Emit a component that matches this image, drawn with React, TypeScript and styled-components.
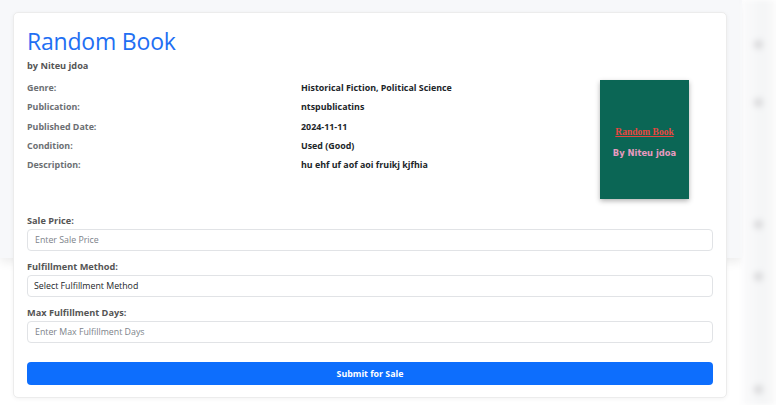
import styled, { createGlobalStyle } from 'styled-components';

const GlobalStyle = createGlobalStyle`
  html, body {
    margin: 0;
    padding: 0;
    background: #ffffff;
  }
  body {
    font-family: "Open Sans", "Noto Sans", Arial, sans-serif;
    color: #212529;
  }
`;

const details = [
  { label: 'Genre:', value: 'Historical Fiction, Political Science' },
  { label: 'Publication:', value: 'ntspublicatins' },
  { label: 'Published Date:', value: '2024-11-11' },
  { label: 'Condition:', value: 'Used (Good)' },
  { label: 'Description:', value: 'hu ehf uf aof aoi fruikj kjfhia' },
];

const backdropDots = [40, 98, 220, 272, 385];

const App = () => {
  return (
    <Page>
      <GlobalStyle />
      <Backdrop aria-hidden>
        <BehindPanel />
        <SideColumn>
          {backdropDots.map((y) => (
            <Dot key={y} style={{ top: y }} />
          ))}
        </SideColumn>
      </Backdrop>

      <Card>
        <Header>
          <Info>
            <Title>Random Book</Title>
            <Byline>by Niteu jdoa</Byline>
            <DetailGrid>
              {details.map((d) => (
                <DetailRow key={d.label}>
                  <DetailLabel>{d.label}</DetailLabel>
                  <DetailValue>{d.value}</DetailValue>
                </DetailRow>
              ))}
            </DetailGrid>
          </Info>
          <Cover>
            <CoverTitle>Random Book</CoverTitle>
            <CoverAuthor>By Niteu jdoa</CoverAuthor>
          </Cover>
        </Header>

        <Form onSubmit={(e) => e.preventDefault()}>
          <Field>
            <FieldLabel>Sale Price:</FieldLabel>
            <Input placeholder="Enter Sale Price" />
          </Field>
          <Field>
            <FieldLabel>Fulfillment Method:</FieldLabel>
            <Select defaultValue="">
              <option value="">Select Fulfillment Method</option>
            </Select>
          </Field>
          <Field>
            <FieldLabel>Max Fulfillment Days:</FieldLabel>
            <Input placeholder="Enter Max Fulfillment Days" />
          </Field>
          <SubmitButton type="submit">Submit for Sale</SubmitButton>
        </Form>
      </Card>
    </Page>
  );
};

const Page = styled.div`
  position: relative;
  width: 776px;
  height: 405px;
  overflow: hidden;
  padding: 12px 0 0 13px;
  box-sizing: border-box;
`;

const Backdrop = styled.div`
  position: absolute;
  inset: 0;
  pointer-events: none;
`;

const BehindPanel = styled.div`
  position: absolute;
  left: 0;
  top: 0;
  width: 742px;
  height: 258px;
  background: #f7f8fa;
  box-shadow: 0 4px 10px rgba(0, 0, 0, 0.08);
`;

const SideColumn = styled.div`
  position: absolute;
  left: 742px;
  top: 0;
  width: 34px;
  height: 405px;
  background: linear-gradient(90deg, #fbfbfc, #f4f5f6 60%, #fafafa);
  filter: blur(2px);
`;

const Dot = styled.span`
  position: absolute;
  left: 12px;
  width: 9px;
  height: 9px;
  border-radius: 50%;
  background: #d9d9db;
  filter: blur(2px);
`;

const Card = styled.div`
  position: relative;
  width: 714px;
  height: 386px;
  box-sizing: border-box;
  padding: 13px 13px 0 13px;
  background: #ffffff;
  border: 1px solid #ececec;
  border-radius: 5px;
  box-shadow: 0 1px 4px rgba(0, 0, 0, 0.05);
  display: flex;
  flex-direction: column;
`;

const Header = styled.div`
  display: flex;
  align-items: flex-start;
  height: 188px;
`;

const Info = styled.div`
  flex: 1;
  display: flex;
  flex-direction: column;
`;

const Title = styled.h1`
  margin: 0;
  font-size: 23px;
  font-weight: 400;
  line-height: 30px;
  color: #1f6ff3;
  letter-spacing: -0.2px;
`;

const Byline = styled.div`
  margin-top: 3px;
  font-size: 9.2px;
  font-weight: 700;
  line-height: 14px;
  color: #555;
`;

const DetailGrid = styled.div`
  margin-top: 5px;
  display: flex;
  flex-direction: column;
`;

const DetailRow = styled.div`
  display: grid;
  grid-template-columns: 274px 1fr;
  height: 19.3px;
  align-items: center;
  font-size: 8.9px;
  font-weight: 700;
`;

const DetailLabel = styled.span`
  color: #6c6f73;
`;

const DetailValue = styled.span`
  color: #212529;
`;

const Cover = styled.div`
  margin: 54px 24px 0 0;
  width: 89px;
  height: 119px;
  box-sizing: border-box;
  padding-top: 6px;
  background: #0b6655;
  box-shadow: 0 2px 5px rgba(0, 0, 0, 0.3);
  display: flex;
  flex-direction: column;
  align-items: center;
  justify-content: center;
  gap: 11px;
`;

const CoverTitle = styled.span`
  font-family: "Liberation Serif", "Times New Roman", serif;
  font-size: 9.5px;
  font-weight: 700;
  color: #e8473f;
  text-decoration: underline;
`;

const CoverAuthor = styled.span`
  font-family: "DejaVu Sans", Verdana, sans-serif;
  font-size: 8.4px;
  font-weight: 700;
  color: #e79ac0;
`;

const Form = styled.form`
  display: flex;
  flex-direction: column;
  gap: 9px;
`;

const Field = styled.div`
  display: flex;
  flex-direction: column;
  gap: 1px;
`;

const FieldLabel = styled.label`
  font-size: 9.2px;
  font-weight: 700;
  line-height: 14px;
  color: #555;
`;

const controlStyles = `
  box-sizing: border-box;
  width: 100%;
  height: 22px;
  padding: 0 7px;
  border: 1px solid #e1e3e6;
  border-radius: 4px;
  background: #fff;
  font-family: "Open Sans", "Noto Sans", Arial, sans-serif;
  font-size: 8.8px;
  color: #212529;
  outline: none;
`;

const Input = styled.input`
  ${controlStyles}
  &::placeholder {
    color: #7d838a;
  }
`;

const Select = styled.select`
  ${controlStyles}
  appearance: none;
  padding-left: 6px;
`;

const SubmitButton = styled.button`
  margin-top: 10px;
  height: 23px;
  width: 100%;
  border: none;
  border-radius: 4px;
  background: #0d6efd;
  color: #fff;
  font-family: "Open Sans", "Noto Sans", Arial, sans-serif;
  font-size: 8.8px;
  font-weight: 700;
  cursor: pointer;
`;

export default App;
